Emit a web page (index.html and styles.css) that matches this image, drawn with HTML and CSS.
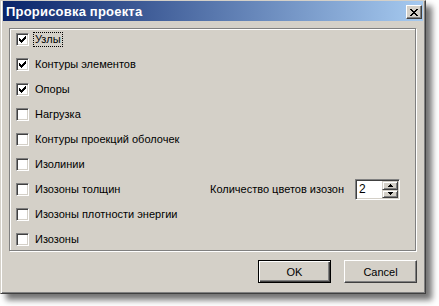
FILE: index.html
```html
<html>
  <head>
    <title>Прорисовка проекта</title>
    <link rel="stylesheet" href="styles.css">
  </head>
  <body>
    <div class='window'>
      <div class='titlebar'>
        <span class='title'>Прорисовка проекта</span>
        <span class='close'>
          <svg width='8' height='7' viewBox='0 0 8 7' shape-rendering='crispEdges'><path d='M0 0h2v1h-2zM6 0h2v1h-2zM1 1h2v1h-2zM5 1h2v1h-2zM2 2h4v1h-4zM3 3h2v1h-2zM2 4h4v1h-4zM1 5h2v1h-2zM5 5h2v1h-2zM0 6h2v1h-2zM6 6h2v1h-2z' fill='#000'/></svg>
        </span>
      </div>

      <div class='content'>
        <div class='group'>
          <div class='row'>
            <span class='check'><svg class='mark' width='7' height='7' viewBox='0 0 7 7' shape-rendering='crispEdges'><path d='M6 0h1v1h-1zM5 1h2v1h-2zM0 2h1v1h-1zM4 2h3v1h-3zM0 3h2v1h-2zM3 3h3v1h-3zM0 4h5v1h-5zM1 5h3v1h-3zM2 6h1v1h-1z' fill='#000'/></svg></span>
            <span class='text focus'>Узлы</span>
          </div>
          <div class='row'>
            <span class='check'><svg class='mark' width='7' height='7' viewBox='0 0 7 7' shape-rendering='crispEdges'><path d='M6 0h1v1h-1zM5 1h2v1h-2zM0 2h1v1h-1zM4 2h3v1h-3zM0 3h2v1h-2zM3 3h3v1h-3zM0 4h5v1h-5zM1 5h3v1h-3zM2 6h1v1h-1z' fill='#000'/></svg></span>
            <span class='text'>Контуры элементов</span>
          </div>
          <div class='row'>
            <span class='check'><svg class='mark' width='7' height='7' viewBox='0 0 7 7' shape-rendering='crispEdges'><path d='M6 0h1v1h-1zM5 1h2v1h-2zM0 2h1v1h-1zM4 2h3v1h-3zM0 3h2v1h-2zM3 3h3v1h-3zM0 4h5v1h-5zM1 5h3v1h-3zM2 6h1v1h-1z' fill='#000'/></svg></span>
            <span class='text'>Опоры</span>
          </div>
          <div class='row'>
            <span class='check'></span>
            <span class='text'>Нагрузка</span>
          </div>
          <div class='row'>
            <span class='check'></span>
            <span class='text'>Контуры проекций оболочек</span>
          </div>
          <div class='row'>
            <span class='check'></span>
            <span class='text'>Изолинии</span>
          </div>
          <div class='row'>
            <span class='check'></span>
            <span class='text'>Изозоны толщин</span>
            <span class='spin-group'>
              <span class='text'>Количество цветов изозон</span>
              <span class='spin'>
                <span class='spin-value'>2</span>
                <span class='spin-btns'>
                  <span class='spin-btn up'><svg width='5' height='3' viewBox='0 0 5 3' shape-rendering='crispEdges'><path d='M2 0h1v1h-1zM1 1h3v1h-3zM0 2h5v1h-5z' fill='#000'/></svg></span>
                  <span class='spin-btn down'><svg width='5' height='3' viewBox='0 0 5 3' shape-rendering='crispEdges'><path d='M0 0h5v1h-5zM1 1h3v1h-3zM2 2h1v1h-1z' fill='#000'/></svg></span>
                </span>
              </span>
            </span>
          </div>
          <div class='row'>
            <span class='check'></span>
            <span class='text'>Изозоны плотности энергии</span>
          </div>
          <div class='row'>
            <span class='check'></span>
            <span class='text'>Изозоны</span>
          </div>
        </div>

        <div class='buttons'>
          <button class='btn default'>OK</button>
          <button class='btn'>Cancel</button>
        </div>
      </div>
    </div>
  </body>
</html>
```

FILE: styles.css
```css
body {
  margin: 0;
  background: #fff;
  font-family: 'Liberation Sans', Arial, sans-serif;
  font-size: 11px;
  color: #000;
}

.window {
  width: 426px;
  height: 294px;
  box-sizing: border-box;
  background: #d4d0c8;
  border-top: 1px solid #d4d0c8;
  border-left: 1px solid #d4d0c8;
  border-right: 1px solid #404040;
  border-bottom: 1px solid #404040;
  box-shadow: inset 1px 0 #fff, inset -1px -1px #808080, 6px 6px 6px rgba(0, 0, 0, 0.55);
  padding: 0 2px;
}

.titlebar {
  height: 20px;
  display: flex;
  align-items: center;
  justify-content: space-between;
  background: linear-gradient(to right, #0a246a, #a6caf0);
  padding: 0 1px 0 3px;
}

.title {
  color: #fff;
  font-weight: bold;
  font-size: 13px;
  letter-spacing: 0.2px;
}

.close {
  width: 16px;
  height: 14px;
  box-sizing: border-box;
  margin-top: 2px;
  background: #d4d0c8;
  border: 1px solid;
  border-color: #fff #404040 #404040 #fff;
  box-shadow: inset -1px -1px #808080;
  display: flex;
  align-items: center;
  justify-content: center;
}

.content {
  padding: 7px 7px 0 6px;
}

.group {
  border: 1px solid #808080;
  box-shadow: inset 1px 1px #fff, 1px 1px #fff;
  padding: 4px 6px;
  display: flex;
  flex-direction: column;
  gap: 12px;
}

.row {
  display: flex;
  align-items: center;
  height: 13px;
}

.check {
  width: 13px;
  height: 13px;
  box-sizing: border-box;
  flex: none;
  background: #fff;
  border: 1px solid;
  border-color: #808080 #fff #fff #808080;
  box-shadow: inset 1px 1px #404040, inset -1px -1px #d4d0c8;
  padding: 2px;
}

.mark {
  display: block;
}

.text {
  margin-left: 6px;
  white-space: nowrap;
  line-height: 13px;
}

.focus {
  margin-left: 5px;
  padding: 0 1px;
  outline: 1px dotted #000;
}

.spin-group {
  margin-left: auto;
  margin-right: 9px;
  display: flex;
  align-items: center;
}

.spin {
  width: 45px;
  height: 21px;
  box-sizing: border-box;
  margin: -4px 0 -4px 11px;
  background: #fff;
  border: 1px solid;
  border-color: #808080 #fff #fff #808080;
  box-shadow: inset 1px 1px #404040, inset -1px -1px #d4d0c8;
  padding: 1px;
  display: flex;
}

.spin-value {
  flex: 1;
  padding-left: 2px;
  line-height: 17px;
  font-size: 12px;
}

.spin-btns {
  width: 16px;
  display: flex;
  flex-direction: column;
}

.spin-btn {
  flex: 1;
  box-sizing: border-box;
  background: #d4d0c8;
  border: 1px solid;
  border-color: #d4d0c8 #404040 #404040 #d4d0c8;
  box-shadow: inset 1px 1px #fff, inset -1px -1px #808080;
  display: flex;
  align-items: center;
  justify-content: center;
}

.buttons {
  display: flex;
  justify-content: flex-end;
  gap: 13px;
  margin-top: 9px;
  margin-right: -1px;
}

.btn {
  width: 73px;
  height: 23px;
  padding: 0;
  font-family: inherit;
  font-size: 11px;
  color: #000;
  background: #d4d0c8;
  border: 1px solid;
  border-color: #fff #404040 #404040 #fff;
  box-shadow: inset -1px -1px #808080;
}

.btn.default {
  border-color: #000;
  box-shadow: inset 1px 1px #fff, inset -1px -1px #404040, inset -2px -2px #808080;
}
```
